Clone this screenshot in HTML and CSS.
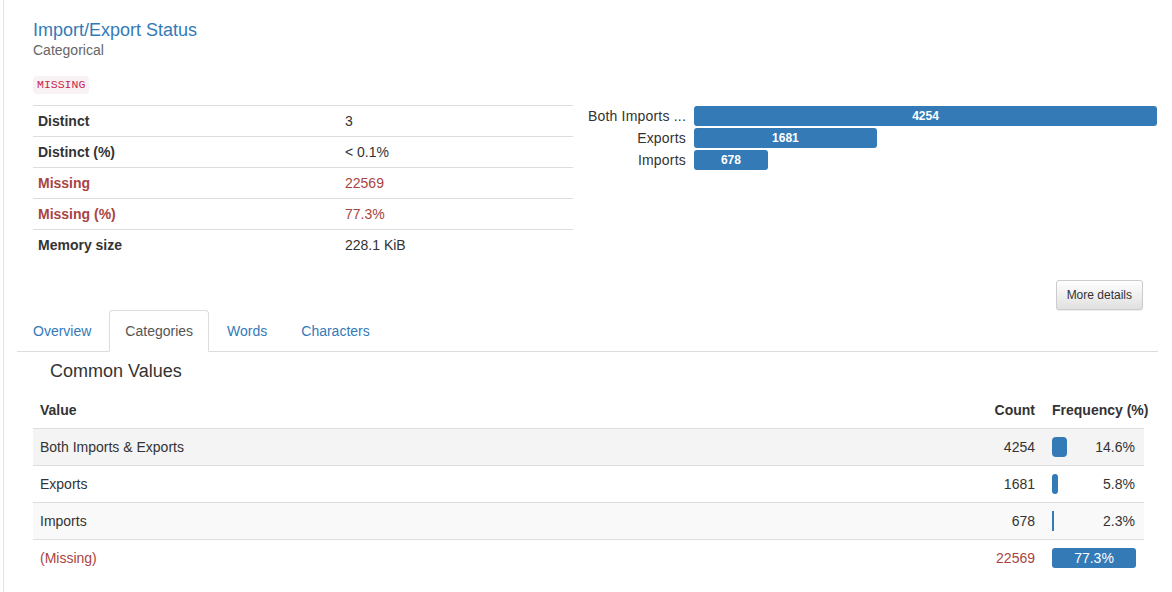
FILE: index.html
```html
<!DOCTYPE html>
<html lang="en">
<head>
<meta charset="utf-8">
<title>Import/Export Status</title>
<link rel="stylesheet" href="styles.css">
</head>
<body>
<div class="page">
  <div class="inner">
    <div class="top">
      <div class="left">
        <div class="title">Import/Export Status</div>
        <div class="subtitle">Categorical</div>
        <div class="badges"><code class="badge">MISSING</code></div>
        <div class="stats">
          <div class="stats-row"><div class="stats-label">Distinct</div><div class="stats-value">3</div></div>
          <div class="stats-row"><div class="stats-label">Distinct (%)</div><div class="stats-value">&lt; 0.1%</div></div>
          <div class="stats-row alert"><div class="stats-label">Missing</div><div class="stats-value">22569</div></div>
          <div class="stats-row alert"><div class="stats-label">Missing (%)</div><div class="stats-value">77.3%</div></div>
          <div class="stats-row"><div class="stats-label">Memory size</div><div class="stats-value">228.1 KiB</div></div>
        </div>
      </div>
      <div class="chart">
        <div class="chart-row"><span class="chart-label">Both Imports ...</span><div class="chart-track"><div class="chart-bar" style="width:100%">4254</div></div></div>
        <div class="chart-row"><span class="chart-label">Exports</span><div class="chart-track"><div class="chart-bar" style="width:39.5%">1681</div></div></div>
        <div class="chart-row"><span class="chart-label">Imports</span><div class="chart-track"><div class="chart-bar" style="width:15.95%">678</div></div></div>
      </div>
    </div>
    <div class="actions"><button class="btn">More details</button></div>
    <ul class="tabs">
      <li class="tab"><a href="#">Overview</a></li>
      <li class="tab active"><a href="#">Categories</a></li>
      <li class="tab"><a href="#">Words</a></li>
      <li class="tab"><a href="#">Characters</a></li>
    </ul>
    <div class="tab-content">
      <h4 class="section-title">Common Values</h4>
      <div class="freq-table">
        <div class="ft-row ft-head">
          <div class="ft-cell first">Value</div>
          <div class="ft-cell num">Count</div>
          <div class="ft-cell freq-head">Frequency (%)</div>
        </div>
        <div class="ft-row stripe-dark">
          <div class="ft-cell first">Both Imports &amp; Exports</div>
          <div class="ft-cell num">4254</div>
          <div class="ft-cell"><div class="freq"><div class="freq-bar" style="width:15px"></div><span class="freq-pct">14.6%</span></div></div>
        </div>
        <div class="ft-row">
          <div class="ft-cell first">Exports</div>
          <div class="ft-cell num">1681</div>
          <div class="ft-cell"><div class="freq"><div class="freq-bar" style="width:6px"></div><span class="freq-pct">5.8%</span></div></div>
        </div>
        <div class="ft-row stripe-light">
          <div class="ft-cell first">Imports</div>
          <div class="ft-cell num">678</div>
          <div class="ft-cell"><div class="freq"><div class="freq-bar thin" style="width:2px"></div><span class="freq-pct">2.3%</span></div></div>
        </div>
        <div class="ft-row missing last">
          <div class="ft-cell first">(Missing)</div>
          <div class="ft-cell num">22569</div>
          <div class="ft-cell"><div class="freq"><div class="freq-bar full" style="width:84px">77.3%</div></div></div>
        </div>
      </div>
    </div>
  </div>
</div>
</body>
</html>
```

FILE: styles.css
```css
html, body {
  margin: 0;
  padding: 0;
  background: #fff;
}

body {
  font-family: "Liberation Sans", Arial, Helvetica, sans-serif;
  font-size: 14px;
  line-height: 20px;
  color: #333;
}

.page {
  margin-left: 3px;
  border-left: 1px solid #e3e3e3;
  min-height: 592px;
  box-sizing: border-box;
}

.inner {
  width: 1141px;
  margin-left: 13px;
  padding-top: 20px;
}

.top {
  display: flex;
  align-items: flex-start;
  padding-left: 16px;
  gap: 14px;
}

.left {
  width: 540px;
  flex: none;
}

.title {
  font-size: 18px;
  line-height: 20px;
  color: #337ab7;
}

.subtitle {
  font-size: 14px;
  line-height: 20px;
  color: #666;
}

.badges {
  display: flex;
  margin-top: 16px;
}

.badge {
  display: inline-block;
  font-family: "Liberation Mono", "DejaVu Sans Mono", monospace;
  font-size: 11.5px;
  line-height: 14px;
  padding: 2px 4px;
  color: #c7254e;
  background: #f9f2f4;
  border-radius: 4px;
}

.stats {
  margin-top: 11px;
}

.stats-row {
  display: flex;
  border-top: 1px solid #ddd;
}

.stats-label,
.stats-value {
  padding: 5px;
  line-height: 20px;
}

.stats-label {
  width: 297px;
  font-weight: bold;
}

.stats-row.alert {
  color: #a94442;
}

.chart {
  width: 570px;
  margin-top: 86px;
  display: flex;
  flex-direction: column;
  gap: 2px;
}

.chart-row {
  display: flex;
  align-items: center;
  height: 20px;
}

.chart-label {
  width: 99px;
  flex: none;
  text-align: right;
  white-space: nowrap;
  padding-right: 8px;
  font-size: 14px;
  letter-spacing: 0.2px;
  line-height: 20px;
  color: #333;
}

.chart-track {
  flex: 1;
  height: 20px;
}

.chart-bar {
  height: 20px;
  background: #337ab7;
  border-radius: 3px;
  color: #fff;
  font-size: 12px;
  font-weight: bold;
  line-height: 20px;
  text-align: center;
}

.actions {
  display: flex;
  justify-content: flex-end;
  padding-right: 15px;
  margin-top: 20px;
}

.btn {
  font-family: "Liberation Sans", Arial, Helvetica, sans-serif;
  font-size: 12px;
  line-height: 18px;
  padding: 5px 10px;
  color: #333;
  background-image: linear-gradient(to bottom, #fff 0, #e0e0e0 100%);
  border: 1px solid #ccc;
  border-radius: 3px;
  box-shadow: inset 0 1px 0 rgba(255, 255, 255, .15), 0 1px 1px rgba(0, 0, 0, .075);
  cursor: pointer;
}

.tabs {
  list-style: none;
  margin: 0;
  padding: 0;
  display: flex;
  border-bottom: 1px solid #ddd;
}

.tab {
  margin-bottom: -1px;
  margin-right: 2px;
}

.tab a {
  display: block;
  padding: 10px 15px;
  line-height: 20px;
  border: 1px solid transparent;
  border-radius: 4px 4px 0 0;
  color: #337ab7;
  text-decoration: none;
}

.tab.active a {
  color: #555;
  background: #fff;
  border-color: #ddd;
  border-bottom-color: transparent;
}

.tab-content {
  padding-left: 16px;
  padding-right: 14px;
}

.section-title {
  margin: 9px 0 0;
  padding-left: 17px;
  font-size: 18px;
  line-height: 20px;
  font-weight: normal;
  color: #333;
}

.freq-table {
  margin-top: 11px;
}

.ft-row {
  display: grid;
  grid-template-columns: 1fr 80px 100px;
  border-bottom: 1px solid #ddd;
}

.ft-row.last {
  border-bottom: none;
}

.ft-head {
  font-weight: bold;
}

.ft-cell {
  padding: 8px;
  line-height: 20px;
  white-space: nowrap;
}

.ft-cell.first {
  padding-left: 7px;
}

.ft-cell.num {
  text-align: right;
  padding-right: 9px;
}

.stripe-dark {
  background: #f4f4f4;
}

.stripe-light {
  background: #f9f9f9;
}

.ft-row.missing {
  color: #a94442;
}

.freq {
  width: 84px;
  display: flex;
  align-items: center;
}

.freq-bar {
  height: 20px;
  background: #337ab7;
  border-radius: 4px;
  flex: none;
}

.freq-bar.thin {
  border-radius: 0;
}

.freq-bar.full {
  color: #fff;
  text-align: center;
  line-height: 20px;
  border-radius: 3px;
}

.freq-pct {
  margin-left: auto;
  padding-right: 1px;
  color: #333;
}
```
